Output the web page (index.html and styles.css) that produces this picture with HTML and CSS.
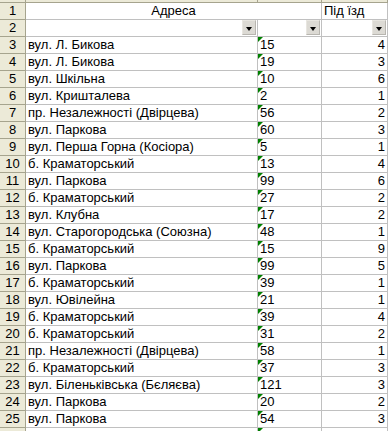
FILE: index.html
```html
<!DOCTYPE html>
<html>
<head>
<meta charset="utf-8">
<link rel="stylesheet" href="styles.css">
</head>
<body>
<div class="sheet">
  <div class="rh top"></div><div class="c top"></div><div class="c top"></div><div class="c top"></div>

  <div class="rh">1</div><div class="c merged">Адреса</div><div class="c">Під їзд</div>
  <div class="rh">2</div><div class="c"><span class="dd"></span></div><div class="c"><span class="dd"></span></div><div class="c"><span class="dd"></span></div>

  <div class="rh">3</div><div class="c">вул. Л. Бикова</div><div class="c t">15</div><div class="c n">4</div>
  <div class="rh">4</div><div class="c">вул. Л. Бикова</div><div class="c t">19</div><div class="c n">3</div>
  <div class="rh">5</div><div class="c">вул. Шкільна</div><div class="c t">10</div><div class="c n">6</div>
  <div class="rh">6</div><div class="c">вул. Кришталева</div><div class="c t">2</div><div class="c n">1</div>
  <div class="rh">7</div><div class="c">пр. Незалежності (Двірцева)</div><div class="c t">56</div><div class="c n">2</div>
  <div class="rh">8</div><div class="c">вул. Паркова</div><div class="c t">60</div><div class="c n">3</div>
  <div class="rh">9</div><div class="c">вул. Перша Горна (Косіора)</div><div class="c t">5</div><div class="c n">1</div>
  <div class="rh">10</div><div class="c">б. Краматорський</div><div class="c t">13</div><div class="c n">4</div>
  <div class="rh">11</div><div class="c">вул. Паркова</div><div class="c t">99</div><div class="c n">6</div>
  <div class="rh">12</div><div class="c">б. Краматорський</div><div class="c t">27</div><div class="c n">2</div>
  <div class="rh">13</div><div class="c">вул. Клубна</div><div class="c t">17</div><div class="c n">2</div>
  <div class="rh">14</div><div class="c">вул. Старогородська (Союзна)</div><div class="c t">48</div><div class="c n">1</div>
  <div class="rh">15</div><div class="c">б. Краматорський</div><div class="c t">15</div><div class="c n">9</div>
  <div class="rh">16</div><div class="c">вул. Паркова</div><div class="c t">99</div><div class="c n">5</div>
  <div class="rh">17</div><div class="c">б. Краматорський</div><div class="c t">39</div><div class="c n">1</div>
  <div class="rh">18</div><div class="c">вул. Ювілейна</div><div class="c t">21</div><div class="c n">1</div>
  <div class="rh">19</div><div class="c">б. Краматорський</div><div class="c t">39</div><div class="c n">4</div>
  <div class="rh">20</div><div class="c">б. Краматорський</div><div class="c t">31</div><div class="c n">2</div>
  <div class="rh">21</div><div class="c">пр. Незалежності (Двірцева)</div><div class="c t">58</div><div class="c n">1</div>
  <div class="rh">22</div><div class="c">б. Краматорський</div><div class="c t">37</div><div class="c n">3</div>
  <div class="rh">23</div><div class="c">вул. Біленьківська (Бєляєва)</div><div class="c t">121</div><div class="c n">3</div>
  <div class="rh">24</div><div class="c">вул. Паркова</div><div class="c t">20</div><div class="c n">2</div>
  <div class="rh">25</div><div class="c">вул. Паркова</div><div class="c t">54</div><div class="c n">3</div>
  <div class="rh"></div><div class="c"></div><div class="c t"></div><div class="c n"></div>
</div>
</body>
</html>
```

FILE: styles.css
```css
html, body {
  margin: 0;
  padding: 0;
  background: #ffffff;
  overflow: hidden;
}

.sheet {
  display: grid;
  grid-template-columns: 26px 232px 64px 66px;
  grid-template-rows: 3px repeat(26, 17px);
  font-family: "Liberation Sans", Arial, sans-serif;
  font-size: 13px;
  color: #000;
  width: 389px;
}

.sheet > div {
  box-sizing: border-box;
  border-right: 1px solid #c0c0c0;
  border-bottom: 1px solid #c0c0c0;
  line-height: 16px;
  white-space: nowrap;
  overflow: visible;
  position: relative;
  padding: 0 2px;
}

.sheet > .top {
  background: #ecead8;
  border-right-color: #a6a48e;
  border-bottom-color: #a6a48e;
}

.rh {
  background: #ecead8;
  border-right-color: #a6a48e !important;
  border-bottom-color: #a6a48e !important;
  text-align: center;
  font-size: 13px;
  padding: 0 !important;
}

.merged {
  grid-column: span 2;
  text-align: center;
}

.n { text-align: right; }

.t::before {
  content: "";
  position: absolute;
  left: 0;
  top: 0;
  border-top: 5px solid #008000;
  border-right: 5px solid transparent;
}

.dd {
  position: absolute;
  right: 1px;
  top: 0;
  width: 14px;
  height: 15px;
  box-sizing: border-box;
  background: #dcdad4;
  border: 1px solid #e8e6e0;
  border-right-color: #b8b6b0;
  border-bottom-color: #b8b6b0;
}

.dd::after {
  content: "";
  position: absolute;
  left: 3px;
  top: 6px;
  border-top: 4px solid #000;
  border-left: 3.5px solid transparent;
  border-right: 3.5px solid transparent;
}
```
